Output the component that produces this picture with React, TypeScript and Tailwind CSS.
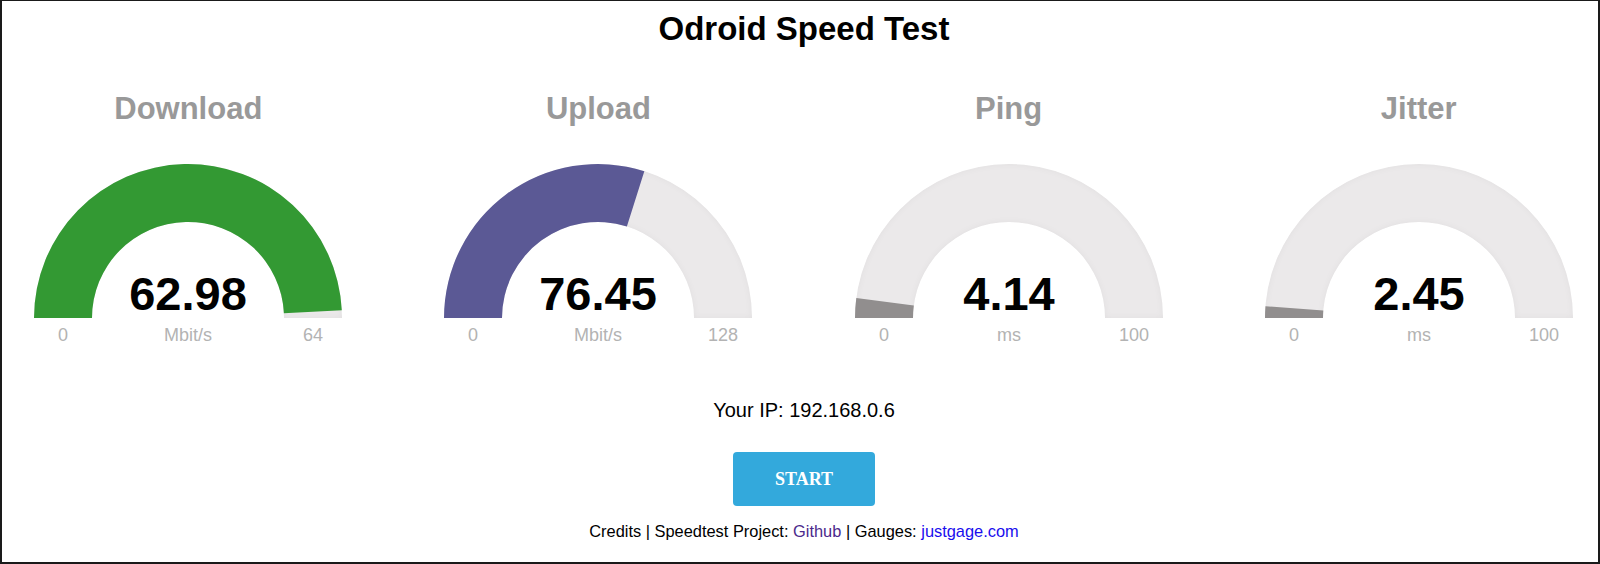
import React from "react";

type GaugeProps = {
  title: string;
  value: string;
  num: number;
  max: number;
  unit: string;
  color: string;
  id: string;
};

const CX = 160;
const CY = 155;
const RO = 154;
const RI = 96;

function arcPath(f: number) {
  const a = Math.PI * (1 - Math.min(Math.max(f, 0), 1));
  const ox = CX + RO * Math.cos(a);
  const oy = CY - RO * Math.sin(a);
  const ix = CX + RI * Math.cos(a);
  const iy = CY - RI * Math.sin(a);
  return `M ${CX - RO} ${CY} A ${RO} ${RO} 0 0 1 ${ox} ${oy} L ${ix} ${iy} A ${RI} ${RI} 0 0 0 ${CX - RI} ${CY} Z`;
}

const bgPath = `M ${CX - RO} ${CY} A ${RO} ${RO} 0 0 1 ${CX + RO} ${CY} L ${CX + RI} ${CY} A ${RI} ${RI} 0 0 0 ${CX - RI} ${CY} Z`;

function Gauge({ title, value, num, max, unit, color, id }: GaugeProps) {
  return (
    <div className="flex w-[360px] flex-col items-center">
      <div className="text-[31px] font-bold leading-[36px] text-[#999999]">{title}</div>
      <svg width="320" height="185" viewBox="0 0 320 185" className="mt-[36px] block">
        <defs>
          <filter id={`sh-${id}`} x="-10%" y="-10%" width="120%" height="120%">
            <feOffset dx="0" dy="0" />
            <feGaussianBlur stdDeviation="3" result="offset-blur" />
            <feComposite operator="out" in="SourceGraphic" in2="offset-blur" result="inverse" />
            <feFlood floodColor="black" floodOpacity="0.1" result="color" />
            <feComposite operator="in" in="color" in2="inverse" result="shadow" />
            <feComposite operator="over" in="shadow" in2="SourceGraphic" />
          </filter>
        </defs>
        <path d={bgPath} fill="#ebe9ea" filter={`url(#sh-${id})`} />
        <path d={arcPath(num / max)} fill={color} />
        <text
          x={CX}
          y={147}
          textAnchor="middle"
          fontFamily="'Liberation Sans', Arial, sans-serif"
          fontWeight="bold"
          fontSize="47"
          fill="#010101"
        >
          {value}
        </text>
        <g fontFamily="'Liberation Sans', Arial, sans-serif" fontSize="18" fill="#b3b3b3" textAnchor="middle">
          <text x={CX - (RO + RI) / 2} y={178}>0</text>
          <text x={CX} y={178}>{unit}</text>
          <text x={CX + (RO + RI) / 2} y={178}>{max}</text>
        </g>
      </svg>
    </div>
  );
}

export default function App() {
  return (
    <div className="h-[564px] w-[1600px] overflow-hidden bg-white font-['Liberation_Sans',Arial,sans-serif]">
      <div className="flex h-full flex-col border-x-2 border-b-2 border-t border-[#1a1a1a] pl-[8px]">
        <h1 className="pt-[9px] text-center text-[33px] font-bold leading-[37px] text-black">Odroid Speed Test</h1>
        <div className="ml-[-1px] mt-[44px] flex gap-[51.5px]">
          <Gauge id="dl" title="Download" value="62.98" num={62.98} max={64} unit="Mbit/s" color="#339933" />
          <Gauge id="ul" title="Upload" value="76.45" num={76.45} max={128} unit="Mbit/s" color="#5b5995" />
          <Gauge id="ping" title="Ping" value="4.14" num={4.14} max={100} unit="ms" color="#918e8e" />
          <Gauge id="jit" title="Jitter" value="2.45" num={2.45} max={100} unit="ms" color="#918e8e" />
        </div>
        <div className="mt-[51px] text-center text-[20px] leading-[22px] text-black">Your IP: 192.168.0.6</div>
        <div className="mt-[31px] flex justify-center">
          <button className="flex h-[54px] w-[142px] items-center justify-center rounded-[4px] bg-[#33a9dc] font-['Liberation_Serif',serif] text-[18px] font-bold text-white">
            START
          </button>
        </div>
        <div className="mt-[16px] text-center text-[16.4px] leading-[19px] text-black">
          Credits | Speedtest Project: <span className="text-[#4c2a8c]">Github</span> | Gauges:{" "}
          <span className="text-[#1a0dee]">justgage.com</span>
        </div>
      </div>
    </div>
  );
}
